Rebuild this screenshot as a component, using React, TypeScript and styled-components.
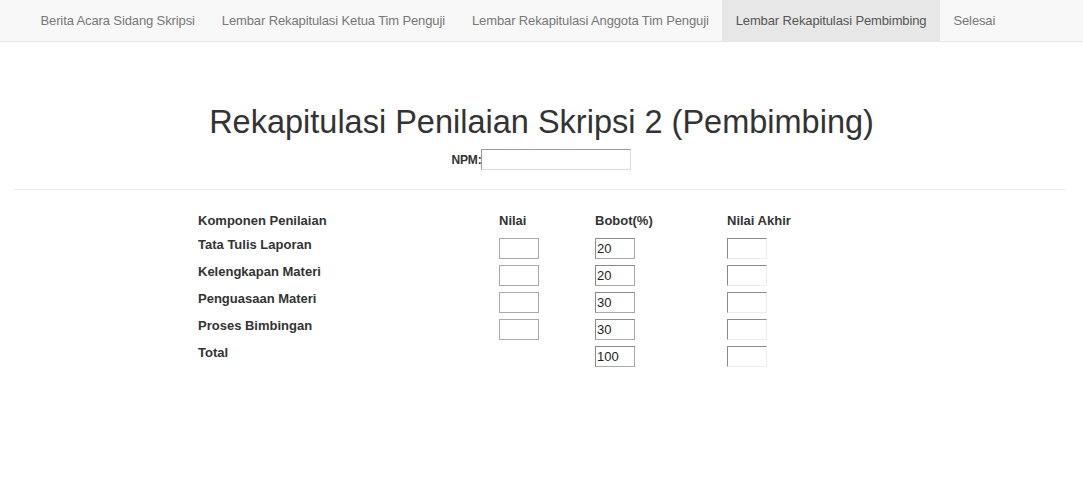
import styled, { createGlobalStyle } from "styled-components";

const GlobalStyle = createGlobalStyle`
  body {
    margin: 0;
    background: #fff;
    font-family: "Liberation Sans", Arial, Helvetica, sans-serif;
    color: #333;
  }
`;

const Navbar = styled.nav`
  display: flex;
  height: 42px;
  padding-left: 27px;
  background: #f8f8f8;
  border-bottom: 1px solid #e7e7e7;
  box-sizing: border-box;
  overflow: hidden;
`;

const NavItem = styled.a<{ $active?: boolean }>`
  display: flex;
  flex-shrink: 0;
  align-items: center;
  padding: 0 13.5px 1px;
  font-size: 13px;
  letter-spacing: -0.12px;
  white-space: nowrap;
  color: ${(p) => (p.$active ? "#555" : "#777")};
  background: ${(p) => (p.$active ? "#e7e7e7" : "transparent")};
  text-decoration: none;
  cursor: pointer;
`;

const Title = styled.h1`
  margin: 60px 0 0;
  font-size: 32.5px;
  line-height: 40px;
  font-weight: normal;
  text-align: center;
  color: #333;
`;

const NpmRow = styled.div`
  display: flex;
  justify-content: center;
  align-items: center;
  margin-top: 7px;
`;

const NpmLabel = styled.label`
  font-size: 12px;
  font-weight: bold;
  letter-spacing: -0.2px;
  color: #333;
`;

const NpmInput = styled.input`
  width: 150px;
  height: 21px;
  box-sizing: border-box;
  margin: 0;
  border: 1px solid #ddd;
  border-top-color: #999;
  border-left-color: #999;
  padding: 1px 2px;
  font-family: "Liberation Sans", Arial, sans-serif;
  font-size: 13px;
`;

const Rule = styled.hr`
  margin: 19px 17px 0 13px;
  border: 0;
  border-top: 1px solid #eee;
`;

const Grid = styled.div`
  display: grid;
  grid-template-columns: 301px 96px 132px auto;
  grid-auto-rows: 27px;
  grid-template-rows: 24px;
  align-items: start;
  margin: 24px 0 0 198px;
`;

const Cell = styled.div`
  font-size: 13px;
  line-height: 14px;
  font-weight: bold;
  color: #333;
`;

const Box = styled.input<{ $variant: "plain" | "bobot" | "akhir" }>`
  width: 40px;
  height: 21px;
  box-sizing: border-box;
  margin: 0;
  padding: 1px 1px;
  font-family: "Liberation Sans", Arial, sans-serif;
  font-size: 13px;
  color: #222;
  background: #fff;
  outline: none;
  border: 1px solid
    ${(p) => (p.$variant === "akhir" ? "#ececec" : "#a9a9a9")};
  border-top-color: ${(p) =>
    p.$variant === "plain" ? "#a9a9a9" : "#8a8a8a"};
  border-left-color: ${(p) =>
    p.$variant === "plain" ? "#a9a9a9" : "#8a8a8a"};
`;

const tabs = [
  "Berita Acara Sidang Skripsi",
  "Lembar Rekapitulasi Ketua Tim Penguji",
  "Lembar Rekapitulasi Anggota Tim Penguji",
  "Lembar Rekapitulasi Pembimbing",
  "Selesai",
];

const rows = [
  { name: "Tata Tulis Laporan", bobot: "20" },
  { name: "Kelengkapan Materi", bobot: "20" },
  { name: "Penguasaan Materi", bobot: "30" },
  { name: "Proses Bimbingan", bobot: "30" },
];

export default function App() {
  return (
    <>
      <GlobalStyle />
      <Navbar>
        {tabs.map((t, i) => (
          <NavItem key={t} $active={i === 3}>
            {t}
          </NavItem>
        ))}
      </Navbar>
      <Title>Rekapitulasi Penilaian Skripsi 2 (Pembimbing)</Title>
      <NpmRow>
        <NpmLabel>NPM:</NpmLabel>
        <NpmInput type="text" />
      </NpmRow>
      <Rule />
      <Grid>
        <Cell>Komponen Penilaian</Cell>
        <Cell>Nilai</Cell>
        <Cell>Bobot(%)</Cell>
        <Cell>Nilai Akhir</Cell>
        {rows.map((r) => (
          <>
            <Cell key={r.name}>{r.name}</Cell>
            <div>
              <Box $variant="plain" type="text" />
            </div>
            <div>
              <Box $variant="bobot" type="text" defaultValue={r.bobot} readOnly />
            </div>
            <div>
              <Box $variant="akhir" type="text" readOnly />
            </div>
          </>
        ))}
        <Cell>Total</Cell>
        <div />
        <div>
          <Box $variant="bobot" type="text" defaultValue="100" readOnly />
        </div>
        <div>
          <Box $variant="akhir" type="text" readOnly />
        </div>
      </Grid>
    </>
  );
}
